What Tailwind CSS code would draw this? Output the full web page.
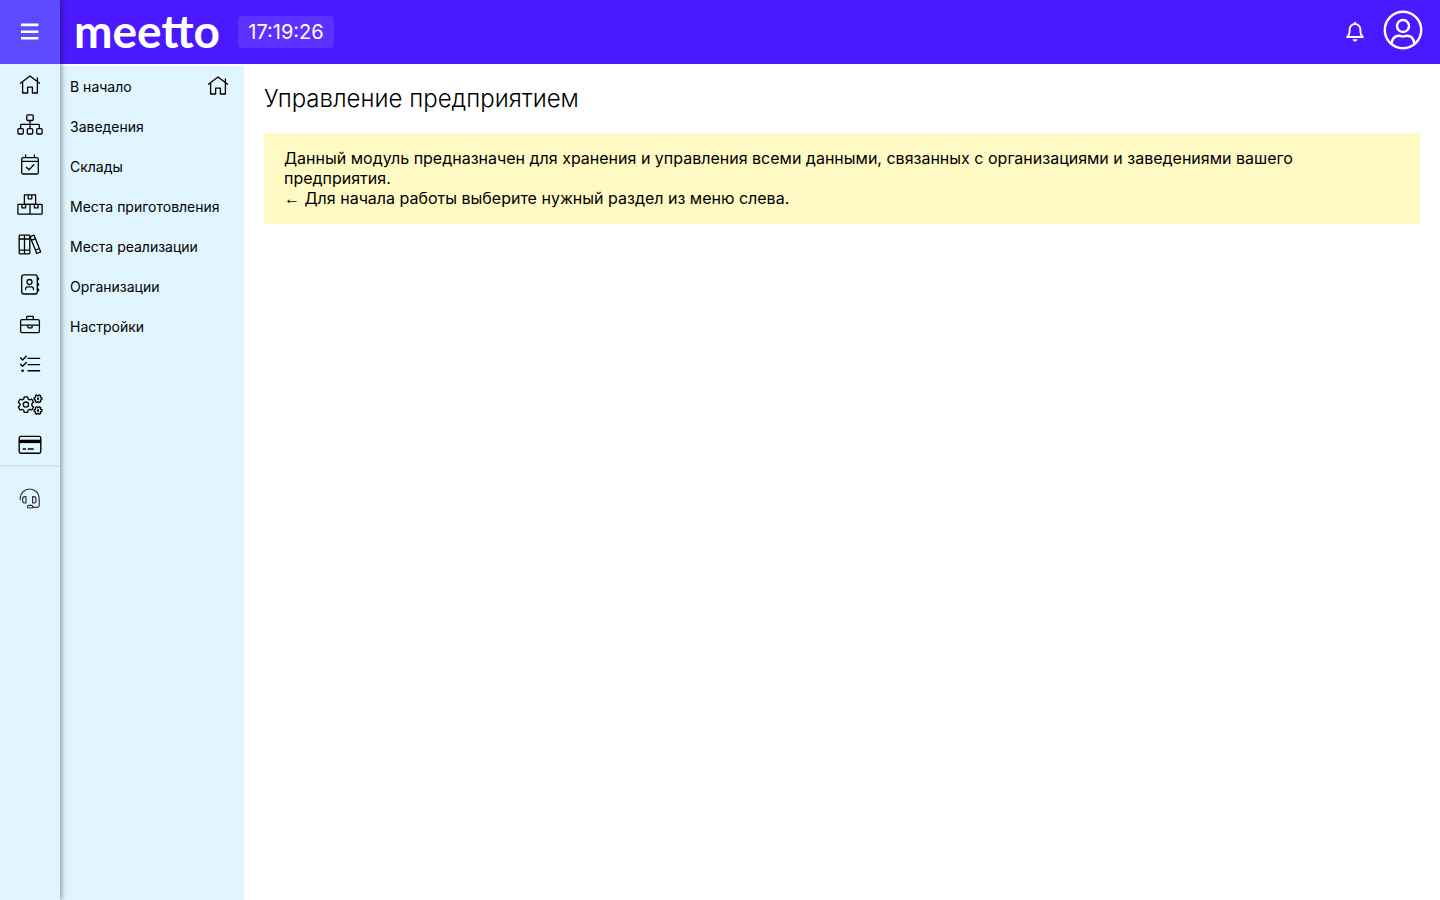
<!DOCTYPE html>
<html lang="ru">
<head>
    <meta charset="UTF-8">
    <meta name="viewport" content="width=device-width, initial-scale=1.0">
    <title>Управление предприятием - meetto</title>
    <script src="https://cdn.jsdelivr.net/npm/@tailwindcss/browser@4"></script>
</head>
<body class="flex min-h-screen bg-white font-['Inter',sans-serif] text-black">
    <!-- Icon rail -->
    <aside class="relative z-10 flex w-[60px] shrink-0 flex-col bg-[#e1f5fe] shadow-[1px_0_6px_rgba(0,0,0,0.45)]">
        <button type="button" aria-label="Меню" class="flex h-16 items-center justify-center bg-[#5c4bff] text-white">
            <svg class="size-6" viewBox="0 0 24 24" fill="none" stroke="currentColor" stroke-width="2.6">
                <path d="M3 4.900h17.400M3 11.700h17.400M3 18.300h17.400"/>
            </svg>
        </button>
        <nav class="flex flex-col border-b-2 border-[#d3e5ee] pt-px">
            <a href="#" aria-label="Главная" class="flex h-10 items-center justify-center">
                <svg class="size-[26px]" viewBox="0 0 26 26" fill="none" stroke="currentColor" stroke-width="1.3" stroke-linecap="round" stroke-linejoin="round">
                    <path d="M3.4 11.2 13 4l9.6 7.2M5.6 10v11h5v-5.800h4.800V21h5V10M20.4 9.600V6"/>
                </svg>
            </a>
            <a href="#" aria-label="Структура" class="flex h-10 items-center justify-center">
                <svg class="size-[26px]" viewBox="0 0 26 26" fill="none" stroke="currentColor" stroke-width="1.3">
                    <rect x="9.8" y="2.9" width="6.4" height="5.6" rx="1"/>
                    <rect x=".9" y="16.6" width="5.4" height="5.4" rx="1"/>
                    <rect x="10.3" y="16.6" width="5.4" height="5.4" rx="1"/>
                    <rect x="19.7" y="16.6" width="5.4" height="5.4" rx="1"/>
                    <path d="M13 8.5v8M3.6 16.5v-3.200q0-1 1-1h16.800q1 0 1 1v3.200"/>
                </svg>
            </a>
            <a href="#" aria-label="Календарь" class="flex h-10 items-center justify-center">
                <svg class="size-[26px]" viewBox="0 0 26 26" fill="none" stroke="currentColor" stroke-width="1.3" stroke-linecap="round" stroke-linejoin="round">
                    <rect x="4.7" y="5.6" width="16.6" height="16.4" rx="1.6"/>
                    <path d="M4.7 9.4h16.600M8.6 3v2.400M17.4 3v2.400M9.4 15.200l2.600 2.600 4.800-5"/>
                </svg>
            </a>
            <a href="#" aria-label="Склад" class="flex h-10 items-center justify-center">
                <svg class="size-[26px]" viewBox="0 0 26 26" fill="none" stroke="currentColor" stroke-width="1.3" stroke-linejoin="round">
                    <rect x="7.4" y="2.8" width="11.2" height="9.5"/>
                    <rect x=".9" y="12.3" width="24.2" height="9.8" rx=".6"/>
                    <path d="M13 12.3v9.800M11.2 2.8v4h3.600v-4M4.9 12.3v3.600h3.700v-3.600M17.4 12.3v3.600h3.700v-3.600"/>
                </svg>
            </a>
            <a href="#" aria-label="Справочники" class="flex h-10 items-center justify-center">
                <svg class="size-[26px]" viewBox="0 0 26 26" fill="none" stroke="currentColor" stroke-width="1.3" stroke-linejoin="round">
                    <rect x="2.2" y="3.2" width="10.6" height="18.6" rx=".8"/>
                    <path d="M7.5 3.2v18.600M2.2 7h10.600M2.2 18.2h10.600M13.200 4.700l3.900-1.500 6.600 16.700-3.900 1.600-7-17.200M14.600 8.200l4-1.600M18.500 18l3.900-1.500"/>
                </svg>
            </a>
            <a href="#" aria-label="Контакты" class="flex h-10 items-center justify-center">
                <svg class="size-[26px]" viewBox="0 0 26 26" fill="none" stroke="currentColor" stroke-width="1.3" stroke-linecap="round" stroke-linejoin="round">
                    <rect x="4.7" y="2.9" width="15.6" height="19.1" rx="2.2"/>
                    <circle cx="12.5" cy="10" r="2.5"/>
                    <path d="M8.6 17.6v-.8q0-2 2-2h3.800q2 0 2 2v.8"/>
                    <path d="M21.3 6.3v1M21.3 12v1M21.3 17.4v1" stroke-width="1.8"/>
                </svg>
            </a>
            <a href="#" aria-label="Портфель" class="flex h-10 items-center justify-center">
                <svg class="size-[26px]" viewBox="0 0 26 26" fill="none" stroke="currentColor" stroke-width="1.3" stroke-linejoin="round">
                    <rect x="3.6" y="7.6" width="18.8" height="13" rx="1.6"/>
                    <path d="M9.7 7.6V5q0-.6.6-.6h5.400q.6 0 .6.6v2.600M3.6 13.2h18.800M10.9 13.2v2q0 .6.6.6h3q.6 0 .6-.6v-2"/>
                </svg>
            </a>
            <a href="#" aria-label="Задачи" class="flex h-10 items-center justify-center">
                <svg class="size-[26px]" viewBox="0 0 26 26" fill="none" stroke="currentColor" stroke-width="1.4" stroke-linecap="round" stroke-linejoin="round">
                    <path d="M11 6.4h11.600M11 12.6h11.600M11 18.8h11.600M3.6 6l2 1.900 3.700-3.600M3.6 12.3l2 1.900 3.700-3.600"/>
                    <circle cx="5.6" cy="18.8" r="1.3" fill="currentColor" stroke="none"/>
                </svg>
            </a>
            <a href="#" aria-label="Настройки системы" class="flex h-10 items-center justify-center">
                <svg class="size-[26px]" viewBox="0 0 26 26" fill="none" stroke="currentColor" stroke-width="1.3" stroke-linejoin="round">
                    <defs>
                        <path id="gear" vector-effect="non-scaling-stroke" d="M-2.2-5.6-1.7-7.8H1.7L2.2-5.6 3.75-4.7 5.9-5.4 7.6-2.4 5.95-.9V.9L7.6 2.4 5.9 5.4 3.75 4.7 2.2 5.6 1.7 7.8H-1.7L-2.2 5.6-3.75 4.7-5.9 5.4-7.6 2.4-5.95.9V-.9L-7.6-2.4-5.9-5.4-3.75-4.7Z"/>
                    </defs>
                    <use href="#gear" transform="translate(8.9 12.6)"/>
                    <circle cx="8.9" cy="12.6" r="2.6"/>
                    <use href="#gear" transform="translate(21 6.7) rotate(30) scale(.5)"/>
                    <circle cx="21" cy="6.7" r="1.2" fill="currentColor" stroke="none"/>
                    <use href="#gear" transform="translate(21 18.5) rotate(30) scale(.5)"/>
                    <circle cx="21" cy="18.5" r="1.2" fill="currentColor" stroke="none"/>
                </svg>
            </a>
            <a href="#" aria-label="Оплата" class="flex h-10 items-center justify-center">
                <svg class="size-[26px]" viewBox="0 0 26 26" fill="none" stroke="currentColor" stroke-width="1.4">
                    <rect x="2.2" y="4.4" width="21.6" height="16.8" rx="1.6"/>
                    <path d="M2.2 9.4h21.600" stroke-width="3.4"/>
                    <path d="M5.7 17h3.200M10.7 17h6"/>
                </svg>
            </a>
        </nav>
        <a href="#" aria-label="Поддержка" class="mt-[11px] flex h-10 items-center justify-center text-[#333]">
            <svg class="size-[26px]" viewBox="0 0 26 26" fill="none" stroke="currentColor" stroke-width="1.2" stroke-linecap="round" stroke-linejoin="round">
                <path d="M3.2 14.6v-1.400a9.5 9.2 0 0 1 19 0v7.400q0 1.800-1.800 1.800h-4.200"/>
                <path d="M9 11.6v6.400H8q-2.400 0-2.400-2.200v-2q0-2.200 2.400-2.200ZM15.6 11.6v6.400h1q2.400 0 2.400-2.200v-2q0-2.200-2.400-2.200Z"/>
                <rect x="10.4" y="20.4" width="5.4" height="2.6" rx="1.3"/>
            </svg>
        </a>
    </aside>

    <div class="flex min-w-0 grow flex-col">
        <!-- Header -->
        <header class="flex h-16 items-center bg-[#4a19ff] pr-[17px] pl-[14px] text-white">
            <a href="#" class="w-[144px] pb-[2px] font-['Lato',sans-serif] text-[46px] leading-[56px] font-bold">meetto</a>
            <time class="ml-5 flex h-8 w-24 items-center justify-center rounded-sm bg-[#5c30ff] text-xl">17:19:26</time>
            <button type="button" aria-label="Уведомления" class="ml-auto">
                <svg class="size-6" viewBox="0 0 24 24" fill="none" stroke="currentColor" stroke-width="1.9" stroke-linecap="round" stroke-linejoin="round">
                    <path d="M12 2.6v1.200M4.200 17c1.600-1.400 2.400-3 2.400-5.400V9.400a5.400 5.400 0 0 1 10.800 0v2.200c0 2.400.8 4 2.400 5.400Z"/>
                    <path d="M9.600 19.200h4.800a2.400 2.200 0 0 1-4.800 0Z" fill="currentColor" stroke="none"/>
                </svg>
            </button>
            <button type="button" aria-label="Профиль" class="mb-1 ml-4">
                <svg class="size-10" viewBox="0 0 40 40" fill="none" stroke="currentColor" stroke-width="2.4">
                    <circle cx="20" cy="20" r="18.2"/>
                    <circle cx="20" cy="16" r="6"/>
                    <path d="M8.6 34.2c.4-5.400 3.400-8.400 7.600-8.400 1.600 0 2.200.7 3.800.7s2.200-.7 3.800-.7c4.200 0 7.200 3 7.600 8.400"/>
                </svg>
            </button>
        </header>

        <div class="flex grow">
            <!-- Section menu -->
            <nav class="mt-[2px] w-[184px] shrink-0 bg-[#e1f5fe] text-sm">
                <a href="#" class="flex h-10 items-center justify-between pt-[2px] pr-[13px] pl-[10px]">
                    В начало
                    <svg class="mb-[2px] size-[26px]" viewBox="0 0 26 26" fill="none" stroke="currentColor" stroke-width="1.3" stroke-linecap="round" stroke-linejoin="round">
                        <path d="M3.4 11.2 13 4l9.6 7.2M5.6 10v11h5v-5.800h4.800V21h5V10M20.4 9.600V6"/>
                    </svg>
                </a>
                <a href="#" class="flex h-10 items-center px-[10px] pt-[2px]">Заведения</a>
                <a href="#" class="flex h-10 items-center px-[10px] pt-[2px]">Склады</a>
                <a href="#" class="flex h-10 items-center px-[10px] pt-[2px]">Места приготовления</a>
                <a href="#" class="flex h-10 items-center px-[10px] pt-[2px]">Места реализации</a>
                <a href="#" class="flex h-10 items-center px-[10px] pt-[2px]">Организации</a>
                <a href="#" class="flex h-10 items-center px-[10px] pt-[2px]">Настройки</a>
            </nav>

            <main class="min-w-0 grow p-5">
                <h1 class="text-2xl leading-[29px] font-light">Управление предприятием</h1>
                <div class="mt-5 bg-[#fff9c4] px-5 py-[15px] leading-5">
                    <p>Данный модуль предназначен для хранения и управления всеми данными, связанных с организациями и заведениями вашего предприятия.</p>
                    <p><span class="font-['Liberation_Sans',sans-serif]">←</span> Для начала работы выберите нужный раздел из меню слева.</p>
                </div>
            </main>
        </div>
    </div>
</body>
</html>
